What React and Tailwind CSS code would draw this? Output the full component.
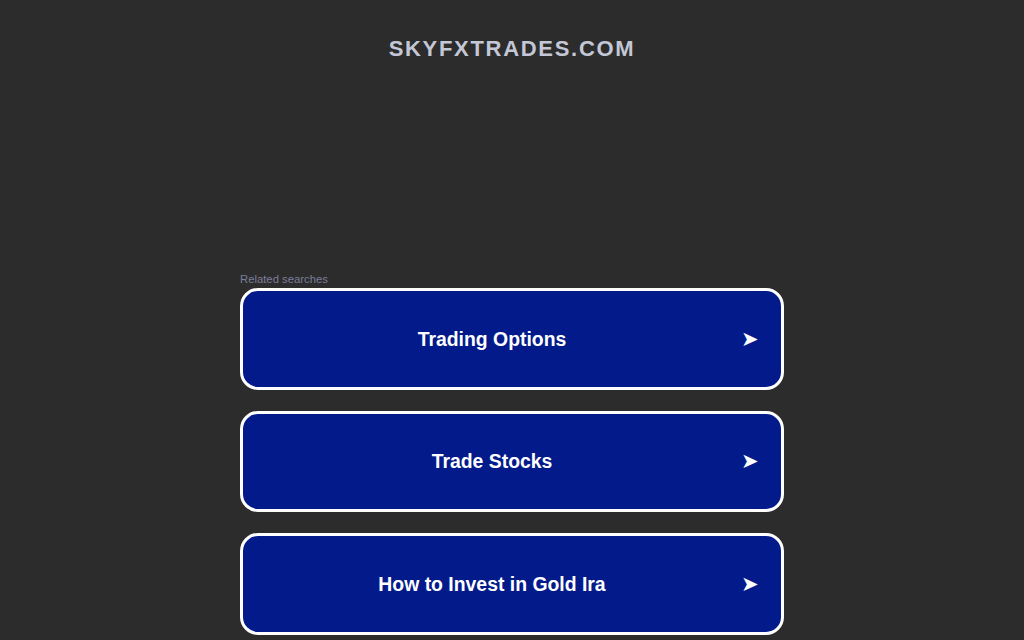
const searches = ['Trading Options', 'Trade Stocks', 'How to Invest in Gold Ira'];

export default function App() {
  return (
    <div className="min-h-[640px] w-full bg-[#2c2c2c] font-['Liberation_Sans',Arial,sans-serif]">
      <header className="pt-[35px] text-center">
        <h1 className="text-[22px] leading-[28px] font-bold tracking-[1.7px] text-[#c4c7d6]">SKYFXTRADES.COM</h1>
      </header>

      <main className="mx-auto mt-[209px] w-[544px]">
        <p className="text-[11.3px] leading-[14px] text-[#7b7d99]">Related searches</p>
        <div className="mt-[2px] flex flex-col gap-[21px]">
          {searches.map((label) => (
            <a
              key={label}
              href="#"
              className="flex h-[101.5px] items-center rounded-[18px] border-[3px] border-white bg-[#021a8a] pt-[1px] text-white"
            >
              <span className="flex-1 text-center text-[19.4px] font-bold">{label}</span>
              <span className="mr-[22px] w-[18px] font-['DejaVu_Sans',sans-serif] text-[21px] leading-none">➤</span>
            </a>
          ))}
        </div>
      </main>
    </div>
  );
}
